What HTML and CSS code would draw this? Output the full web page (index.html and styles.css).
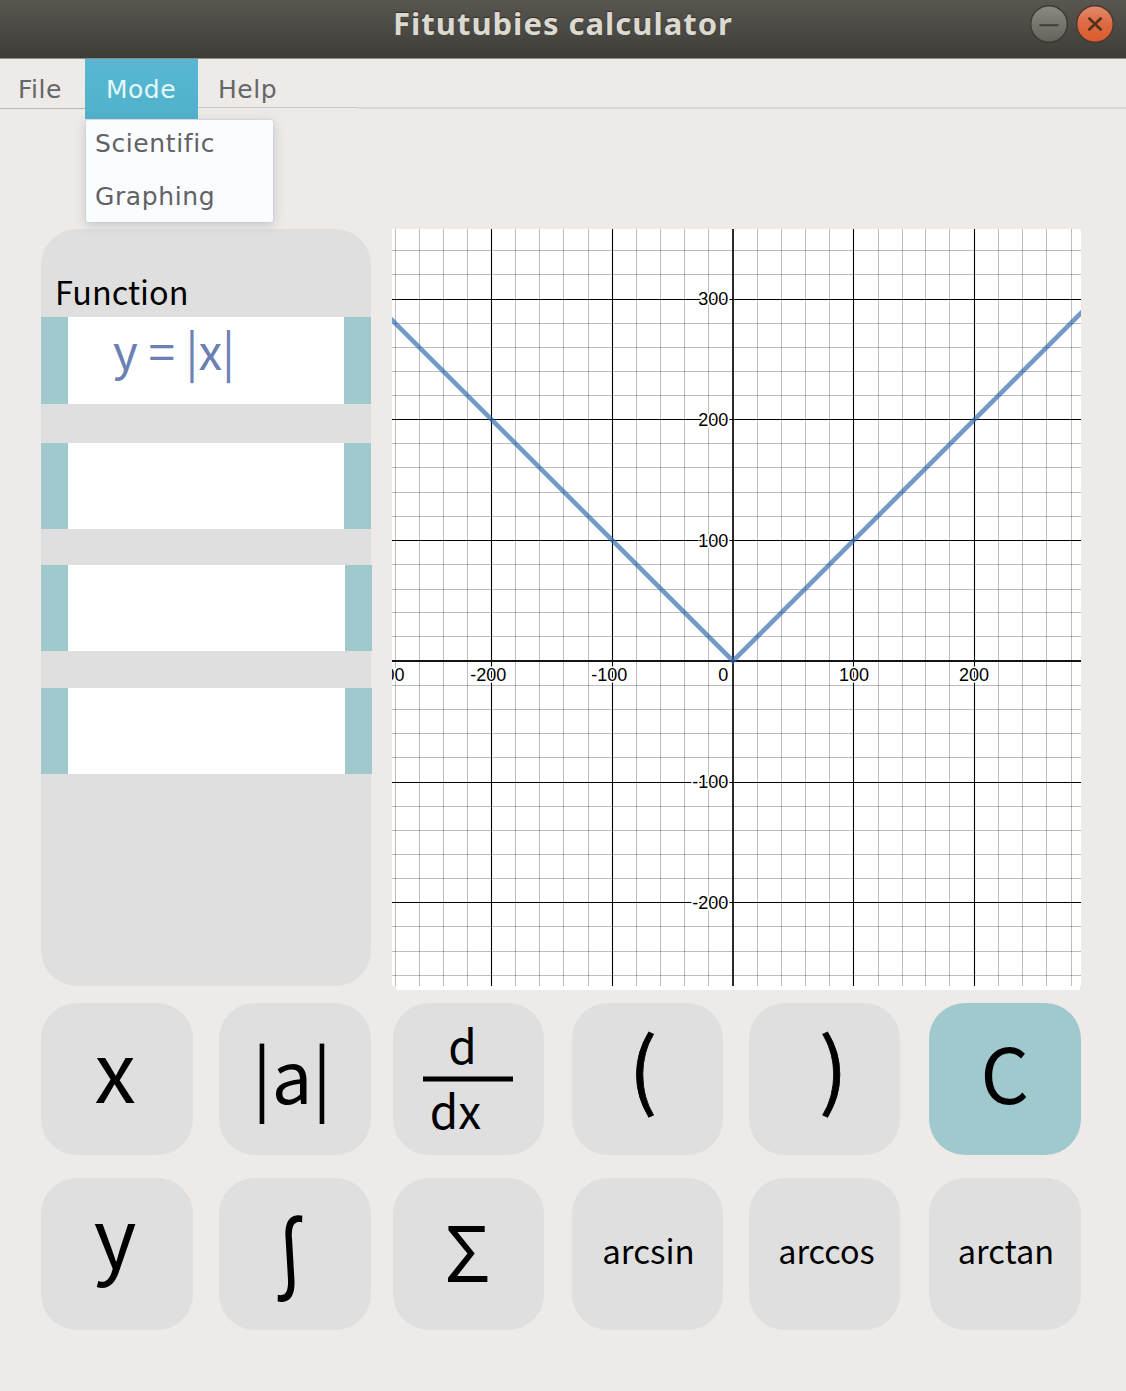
FILE: index.html
```html
<!DOCTYPE html>
<html lang="en">
<head>
<meta charset="utf-8">
<title>Fitutubies calculator</title>
<link rel="stylesheet" href="styles.css">
</head>
<body>
<header class="titlebar">
  <h1 class="title">Fitutubies calculator</h1>
  <div class="window-buttons">
    <svg class="window-button" viewBox="0 0 40 40" aria-label="Minimize">
      <defs><linearGradient id="gray" x1="0" y1="0" x2="0" y2="1"><stop offset="0" stop-color="#8b8982"/><stop offset="1" stop-color="#64625b"/></linearGradient></defs>
      <circle cx="20" cy="20" r="18.3" fill="url(#gray)" stroke="#3b3934" stroke-width="1.4"/>
      <path d="M10.5 21.2H29.5" stroke="#45433e" stroke-width="2.2"/>
    </svg>
    <svg class="window-button" viewBox="0 0 40 40" aria-label="Close">
      <defs><linearGradient id="orange" x1="0" y1="0" x2="0" y2="1"><stop offset="0" stop-color="#e58b6d"/><stop offset=".5" stop-color="#dc6a42"/><stop offset="1" stop-color="#db5b2c"/></linearGradient></defs>
      <circle cx="20" cy="20" r="18.3" fill="url(#orange)" stroke="#4a3830" stroke-width="1.4"/>
      <path d="M13.5 13.7L26.5 26.3M26.5 13.7L13.5 26.3" stroke="#54301f" stroke-width="2.6"/>
    </svg>
  </div>
</header>
<nav class="menubar">
  <div class="menu menu-file">File</div>
  <div class="menu menu-mode">Mode
    <div class="dropdown">
      <div class="option">Scientific</div>
      <div class="option">Graphing</div>
    </div>
  </div>
  <div class="menu menu-help">Help</div>
  <div class="menu-rest"></div>
</nav>
<main class="workspace">
  <section class="functions">
    <h2 class="functions-title">Function</h2>
    <div class="field"><span class="equation">y = |x|</span></div>
    <div class="field"></div>
    <div class="field wide"></div>
    <div class="field wide"></div>
  </section>
  <svg class="plot" viewBox="392 229 689 761">
    <path fill="#fff" d="M392 229H1081V986H1080V990H396V986H392Z"/>
    <path class="minor" d="M395.5 229V986M419.5 229V986M443.5 229V986M467.5 229V986M515.5 229V986M539.5 229V986M563.5 229V986M588.5 229V986M636.5 229V986M660.5 229V986M684.5 229V986M708.5 229V986M757.5 229V986M781.5 229V986M805.5 229V986M829.5 229V986M878.5 229V986M902.5 229V986M925.5 229V986M949.5 229V986M998.5 229V986M1022.5 229V986M1046.5 229V986M1071.5 229V986"/>
    <path class="minor" d="M392 250.5H1081M392 274.5H1081M392 323.5H1081M392 347.5H1081M392 371.5H1081M392 395.5H1081M392 443.5H1081M392 467.5H1081M392 492.5H1081M392 516.5H1081M392 564.5H1081M392 589.5H1081M392 612.5H1081M392 636.5H1081M392 685.5H1081M392 709.5H1081M392 733.5H1081M392 757.5H1081M392 806.5H1081M392 830.5H1081M392 854.5H1081M392 878.5H1081M392 926.5H1081M392 951.5H1081M392 975.5H1081"/>
    <path class="major" d="M491.5 229V986M612.5 229V986M853.5 229V986M974.5 229V986M392 299.5H1081M392 419.5H1081M392 540.5H1081M392 782.5H1081M392 902.5H1081"/>
    <path class="axis" d="M733 229V986M392 661H1081"/>
    <g class="tick" text-anchor="end">
      <text x="728.2" y="305">300</text>
      <text x="728.2" y="426">200</text>
      <text x="728.2" y="546.5">100</text>
      <text x="728.2" y="787.5">-100</text>
      <text x="728.2" y="908.5">-200</text>
      <text x="728.2" y="681">0</text>
      <text x="404.5" y="681">-300</text>
    </g>
    <g class="tick" text-anchor="middle">
      <text x="488.3" y="681">-200</text>
      <text x="609.3" y="681">-100</text>
      <text x="854" y="681">100</text>
      <text x="974" y="681">200</text>
    </g>
    <path class="curve" d="M388 316L733 661L1085 309"/>
  </svg>
</main>
<section class="keypad">
  <button class="key"><svg viewBox="0 0 152 152"><text x="74.2" y="99.8" font-size="83">x</text></svg></button>
  <button class="key"><svg viewBox="0 0 152 152"><text x="73" y="101.2" font-size="72">|a|</text></svg></button>
  <button class="key narrow"><svg viewBox="0 0 151 152"><text x="69.5" y="60.7" font-size="46">d</text><path d="M30 76H120" stroke="#000" stroke-width="5"/><text x="62.5" y="126" font-size="46">dx</text></svg></button>
  <button class="key narrow"><svg viewBox="0 0 151 152"><text class="paren" x="71" y="97.5" font-size="84">(</text></svg></button>
  <button class="key narrow"><svg viewBox="0 0 151 152"><text class="paren" x="84.5" y="97.5" font-size="84">)</text></svg></button>
  <button class="key clear"><svg viewBox="0 0 152 152"><text x="75.8" y="101.3" font-size="76">C</text></svg></button>
  <button class="key"><svg viewBox="0 0 152 152"><text x="74.2" y="90.5" font-size="82">y</text></svg></button>
  <button class="key"><svg viewBox="0 0 152 152"><text transform="matrix(.96 0 .065 1.11 71 81)" y="31.4" font-size="84">∫</text></svg></button>
  <button class="key narrow"><svg viewBox="0 0 151 152"><text x="74.5" y="104.3" font-size="77">Σ</text></svg></button>
  <button class="key narrow"><svg viewBox="0 0 151 152"><text x="76.5" y="86" font-size="33">arcsin</text></svg></button>
  <button class="key narrow"><svg viewBox="0 0 151 152"><text x="77.5" y="86" font-size="32.3">arccos</text></svg></button>
  <button class="key"><svg viewBox="0 0 152 152"><text x="77" y="85.5" font-size="32.5">arctan</text></svg></button>
</section>
</body>
</html>
```
FILE: styles.css
```css
* { box-sizing: border-box; }

body {
  margin: 0;
  width: 1126px;
  height: 1391px;
  background: #edeae7;
  color: #000;
  font-family: "Noto Sans CJK SC", "Noto Sans", sans-serif;
  overflow: hidden;
}

.titlebar {
  display: grid;
  grid-template-columns: 1fr auto 1fr;
  height: 59px;
  background: linear-gradient(#59564f, #3e3d39);
  border-bottom: 1px solid #8f8c88;
}

.title {
  grid-column: 2;
  margin: 0;
  font: bold 31px/47px "Noto Sans", sans-serif;
  letter-spacing: 1px;
  color: #dcd9d0;
  text-shadow: 0 -1px 1px #2f2e2a;
}

.window-buttons {
  display: flex;
  justify-content: flex-end;
  gap: 6px;
  padding: 4px 11px 0 0;
}

.window-button { width: 40px; height: 40px; }

.menubar {
  display: flex;
  height: 60px;
  font: 25px/61px "DejaVu Sans", sans-serif;
  letter-spacing: 0.5px;
  color: #646669;
}

.menu-file {
  width: 85px;
  height: 50px;
  padding-left: 18px;
  border-bottom: 1px solid #b9b6b4;
}

.menu-mode {
  position: relative;
  width: 113px;
  padding-left: 21px;
  background: linear-gradient(#58b8d3, #50b1cb);
  color: #e2f8fb;
}

.menu-help {
  width: 160px;
  height: 49px;
  padding-left: 20px;
  border-bottom: 1px solid #c8c5c3;
}

.menu-rest {
  flex: 1;
  height: 50px;
  border-bottom: 2px solid #dad7d4;
}

.dropdown {
  position: absolute;
  z-index: 2;
  top: 61px;
  left: 1px;
  width: 187px;
  height: 102px;
  padding-left: 9px;
  border-radius: 2px;
  background: #fbfcfe;
  box-shadow: 0 0 2px #b9bec8, 0 3px 12px rgba(100, 110, 135, 0.3);
  color: #606266;
  letter-spacing: 0.6px;
}

.option { height: 53px; line-height: 48px; }

.workspace {
  display: flex;
  gap: 21px;
  padding: 110px 0 0 41px;
}

.functions {
  display: flex;
  flex-direction: column;
  width: 330px;
  height: 757px;
  border-radius: 36px;
  background: #dfdfdf;
}

.functions-title {
  margin: 0 0 0 14px;
  height: 88px;
  padding-top: 38px;
  font-size: 32.4px;
  font-weight: 400;
  line-height: 48px;
}

.field {
  flex: none;
  width: 330px;
  height: 87px;
  margin-bottom: 39px;
  padding-left: 45px;
  border: solid #9fc9cc;
  border-width: 0 27px;
  background: #fff;
}

.field + .field { height: 86px; margin-bottom: 36px; }
.field.wide { width: 331px; }
.field.wide + .field.wide { margin-top: 1px; }

.equation {
  display: block;
  font-size: 47.6px;
  line-height: 66px;
  white-space: pre;
  color: #6b80b3;
}

.plot { flex: none; width: 689px; height: 761px; }
.minor { stroke: #000; stroke-opacity: 0.26; }
.major { stroke: #000; stroke-width: 1.1; }
.axis { stroke: #141416; stroke-width: 1.8; }
.curve { fill: none; stroke: #2d67ad; stroke-opacity: 0.67; stroke-width: 4.6; }

.tick {
  font: 18px "Liberation Sans", Arial, sans-serif;
  fill: #000;
  stroke: #fff;
  stroke-width: 3.2;
  paint-order: stroke;
}

.keypad {
  display: grid;
  grid-template-columns: 178px 174px 179px 177px 180px 152px;
  row-gap: 23px;
  padding: 13px 0 0 41px;
}

.key {
  width: 152px;
  height: 152px;
  padding: 0;
  border: 0;
  border-radius: 36px;
  background: #dfdfdf;
  color: #000;
  font-family: inherit;
}

.key.narrow { width: 151px; }
.key.clear { background: #9fc9cc; }
.key svg { display: block; width: 100%; height: 100%; overflow: visible; }
.key text { text-anchor: middle; }
.key .paren { stroke: #000; stroke-width: 0.8; }
```
